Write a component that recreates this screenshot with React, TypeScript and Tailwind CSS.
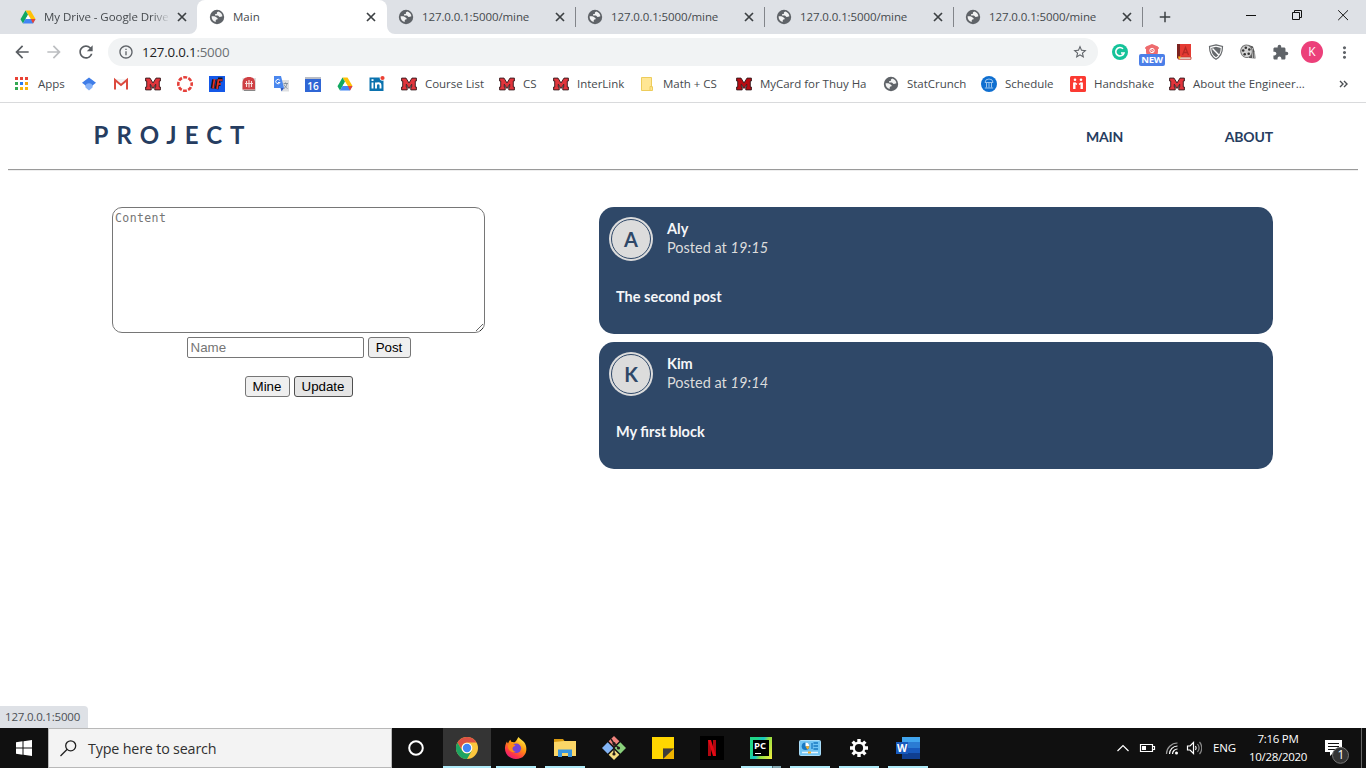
import React from "react";
import {
  MdArrowBack,
  MdArrowForward,
  MdRefresh,
  MdInfoOutline,
  MdStarBorder,
  MdExtension,
  MdMoreVert,
  MdAdd,
} from "react-icons/md";

const Globe = () => (
  <svg width="16" height="16" viewBox="0 0 16 16" className="shrink-0">
    <circle cx="8" cy="8" r="7.200" fill="#5f6368" />
    <path
      d="M9.200 2.500c-1 .5-1.500 1-1.300 1.700.1.600-.6.800-1.300.9-.7.100-.6.800-.5 1.300h2.600c.9 0 1 .8 1.600 1.300.5.500 1.500.1 2.400-.2l.7-.2c-.1-2.300-1.800-4.200-4.200-4.800zM2.600 7.300c-.2 2.900 1.500 5.100 4.100 5.700v-1.300c0-.8.5-1.200 1.300-1.200.9 0 .9-1 .3-1.400C7.600 8.600 6.900 8 6 7.500c-.9-.5-2.200-.4-3.400-.2z"
      fill="#fff"
      fillOpacity=".92"
    />
  </svg>
);

const TabClose = () => (
  <svg width="16" height="16" viewBox="0 0 16 16" className="shrink-0">
    <path d="M4 4l8 8M12 4l-8 8" stroke="#3c4043" strokeWidth="1.700" />
  </svg>
);

const Drive = () => (
  <svg width="16" height="16" viewBox="0 0 16 16" className="shrink-0">
    <path d="M5.500 1.500H10.500L15.500 10H10.800z" fill="#ffc107" />
    <path d="M5.500 1.500L8 5.800 3 14.500 .5 10.200z" fill="#11a861" />
    <path d="M5.500 10H15.500L13 14.500H3z" fill="#4285f4" />
    <path d="M10.800 10H15.500L13 14.500z" fill="#ea4335" />
    <path d="M8 6L10.400 10H5.700z" fill="#fff" />
  </svg>
);

const BlockM = ({ dark = false }: { dark?: boolean }) => (
  <svg width="16" height="14" viewBox="0 0 16 14" className="shrink-0">
    <path
      d="M.6 1.100H5L8 6 11 1.100H15.400V4H14.300V10H15.400V12.900H9.800V10H10.700V7.300L8 11.500 5.300 7.300V10H6.200V12.900H.6V10H1.700V4H.6z"
      fill={dark ? "#b80b12" : "#e0353c"}
      stroke="#30191c"
      strokeWidth=".9"
    />
  </svg>
);

const tabs = ["127.0.0.1:5000/mine", "127.0.0.1:5000/mine", "127.0.0.1:5000/mine", "127.0.0.1:5000/mine"];

function TabStrip() {
  return (
    <div className="flex h-[34px] bg-[#dee1e6] text-[11.5px] text-[#45494d]">
      <div className="flex w-[197px] shrink-0 items-center pl-5 pr-[7px]">
        <Drive />
        <span className="ml-2 w-[126px] overflow-hidden whitespace-nowrap tracking-[-0.05px] [mask-image:linear-gradient(to_right,black_85%,transparent)]">
          My Drive - Google Drive
        </span>
        <span className="ml-auto">
          <TabClose />
        </span>
      </div>
      <div className="relative flex w-[190px] shrink-0 items-center rounded-t-lg bg-white pl-3 pr-2">
        <svg className="absolute -left-2 bottom-0" width="8" height="8">
          <path d="M8 0V8H0A8 8 0 0 0 8 0z" fill="#fff" />
        </svg>
        <svg className="absolute -right-2 bottom-0" width="8" height="8">
          <path d="M0 0V8H8A8 8 0 0 1 0 0z" fill="#fff" />
        </svg>
        <Globe />
        <span className="ml-2">Main</span>
        <span className="ml-auto">
          <TabClose />
        </span>
      </div>
      {tabs.map((t, i) => (
        <div key={i} className="flex w-[189px] shrink-0 items-center pl-[11px]">
          <Globe />
          <span className="ml-2 tracking-[-0.100px]">{t}</span>
          <span className="ml-auto mr-[7px]">
            <TabClose />
          </span>
          <span className="h-5 w-px bg-[#82858a]" />
        </div>
      ))}
      <div className="flex w-[44px] items-center justify-center">
        <MdAdd className="size-[18px] text-[#3c4043]" />
      </div>
      <div className="ml-auto mr-px flex h-[29px] items-center">
        <svg width="138" height="28" viewBox="1227 0 138 28" fill="none" stroke="#111" strokeWidth="1">
          <path d="M1246 14.500h10M1292.500 11.500h7v7h-7zM1294.500 11.500v-2h7v7h-2" />
          <path d="M1338.200 9.300l9.800 9.800M1348 9.300l-9.800 9.800" />
        </svg>
      </div>
    </div>
  );
}

const Ext = ({ children }: { children: React.ReactNode }) => (
  <div className="relative flex h-8 w-8 items-center justify-center">{children}</div>
);

function Toolbar() {
  return (
    <div className="flex h-9 items-center pl-[6px] pr-[6px]">
      <Ext>
        <MdArrowBack className="size-[20px] text-[#5a5e63]" />
      </Ext>
      <Ext>
        <MdArrowForward className="size-[20px] text-[#bcbec1]" />
      </Ext>
      <Ext>
        <MdRefresh className="size-[20px] text-[#5a5e63]" />
      </Ext>
      <div className="ml-[6px] flex h-7 w-[990px] items-center rounded-full bg-[#f1f3f4] pl-[10px] pr-[10px]">
        <MdInfoOutline className="size-4 text-[#5f6368]" />
        <span className="ml-2 pt-px text-[13.300px] tracking-[-0.190px] text-[#202124]">
          127.0.0.1<span className="text-[#6b6f73]">:5000</span>
        </span>
        <MdStarBorder className="ml-auto size-4 text-[#5f6368]" />
      </div>
      <div className="ml-[6px] flex">
        <Ext>
          <svg width="16" height="16" viewBox="0 0 16 16">
            <circle cx="8" cy="8" r="8" fill="#15c39a" />
            <path d="M11 4.800A4.200 4.200 0 1 0 12 9H9" fill="none" stroke="#fff" strokeWidth="1.600" />
          </svg>
        </Ext>
        <Ext>
          <svg width="16" height="18" viewBox="0 0 16 18" className="-mt-[1px]">
            <path d="M8 1L14 3.500V9c0 3-2 5-6 7-4-2-6-4-6-7V3.500z" fill="#ee6b6e" />
            <path d="M1 5h14" stroke="#ee6b6e" strokeWidth="1.500" />
            <circle cx="8" cy="7.500" r="2.200" fill="none" stroke="#fff" />
            <path d="M6.500 6l3 3" stroke="#fff" />
          </svg>
          <span className="absolute left-[3px] top-[18px] flex h-3 w-[26px] items-center justify-center rounded-[2px] bg-[#4c7fe8] text-[9.500px] font-bold leading-none tracking-[-0.200px] text-white">
            NEW
          </span>
        </Ext>
        <Ext>
          <svg width="15" height="16" viewBox="0 0 15 16">
            <path d="M1 0H14V13H3L1 15z" fill="#e53b33" />
            <path d="M0 0H3V13L1 14.500H0z" fill="#7c2320" />
            <path d="M1.500 13H14V15.300H1.500z" fill="#eee5d8" stroke="#c2372c" strokeWidth=".8" />
            <path d="M5.500 11L8.500 3.500 11.500 11M6.500 8.500h4" fill="none" stroke="#b52a25" strokeWidth="1.300" />
            <path d="M1 12.500h3l-1.500 3z" fill="#f7bd18" />
          </svg>
        </Ext>
        <Ext>
          <svg width="16" height="16" viewBox="0 0 16 16" fill="none">
            <path d="M8 .8L14.500 2.500C14.500 9 13 12.500 8 15.300 3 12.500 1.500 9 1.500 2.500z" fill="#fff" stroke="#66696c" strokeWidth="1.200" />
            <path d="M8 2.800L12.700 4C12.500 8.500 11.500 11 8 13.200 4.500 11 3.500 8.500 3.300 4z" fill="#66696c" />
            <path d="M4.500 4.500l6.500 6.800" stroke="#fff" strokeWidth="1.400" />
          </svg>
        </Ext>
        <Ext>
          <svg width="16" height="16" viewBox="0 0 16 16">
            <path d="M8 .8L13 2.500 15 9 15.500 14.500 9 14z" fill="#555" />
            <path d="M12.500 4v10M14.300 8v6" stroke="#ccc" strokeWidth=".8" />
            <ellipse cx="6.500" cy="7.300" rx="5.700" ry="6.300" fill="#d4d4d4" stroke="#777" transform="rotate(-15 6.500 7.300)" />
            <g fill="#333">
              <circle cx="5.800" cy="3.700" r="1.300" />
              <circle cx="3.200" cy="6.500" r="1.300" />
              <circle cx="9.300" cy="5.500" r="1.300" />
              <circle cx="4.700" cy="10.300" r="1.300" />
              <circle cx="8.700" cy="9.800" r="1.300" />
            </g>
          </svg>
        </Ext>
        <Ext>
          <MdExtension className="size-[17px] text-[#5f6368]" />
        </Ext>
        <Ext>
          <span className="flex size-[22px] items-center justify-center rounded-full bg-[#ec407a] text-[12px] text-white">K</span>
        </Ext>
        <Ext>
          <MdMoreVert className="size-[19px] text-[#5f6368]" />
        </Ext>
      </div>
    </div>
  );
}

const AppsGrid = () => (
  <svg width="14" height="14" viewBox="0 0 14 14" className="shrink-0">
    <path d="M0 0h3v3H0zM5 0h3v3H5zM10 0h3v3h-3z" fill="#e94235" />
    <path d="M0 5h3v3H0z" fill="#34a853" />
    <path d="M5 5h3v3H5z" fill="#2a7bf0" />
    <path d="M10 5h3v3h-3z" fill="#f5a70b" />
    <path d="M0 10h3v3H0z" fill="#34a853" />
    <path d="M5 10h3v3H5zM10 10h3v3h-3z" fill="#f7b50c" />
  </svg>
);

const smallIcons: React.ReactNode[] = [
  <svg width="16" height="16" viewBox="0 0 16 16">
    <path d="M4 8a4 4 0 0 1 8 0l-.5 3.500-3.500 3-3.500-3z" fill="#85b1f8" />
    <path d="M8 1.500L15 6.800l-3.500 2.700C10.500 6.500 5.500 6.500 4.500 9.500L1 6.800z" fill="#3f7de8" />
  </svg>,
  <svg width="16" height="16" viewBox="0 0 16 16">
    <path d="M1 3H15V13.500H1z" fill="#f3f3f3" />
    <path d="M3 6v7.500h10V6L8 10z" fill="#fff" />
    <path d="M2 13.500V4l6 5 6-5v9.500" fill="none" stroke="#dc4a3e" strokeWidth="2" />
  </svg>,
  <BlockM />,
  <svg width="16" height="16" viewBox="0 0 16 16">
    <circle cx="8" cy="8" r="6.700" fill="none" stroke="#e5403a" strokeWidth="2.600" strokeDasharray="3.900 1.360" strokeDashoffset="1.950" />
  </svg>,
  <svg width="16" height="16" viewBox="0 0 16 16">
    <path d="M0 0H16V16H0z" fill="#1458e8" />
    <path d="M5 3.500L3.500 12.500M9.500 3.500L7.500 13M9 3.500h4.500M8.500 8h3" fill="none" stroke="#15141a" strokeWidth="3.800" />
    <path d="M5.500 3L4 12.500M9.500 4h4M8.500 8h3.500M9.500 3.500L8 13" fill="none" stroke="#e42f25" strokeWidth="1.700" />
  </svg>,
  <svg width="16" height="16" viewBox="0 0 16 16">
    <path d="M1.500 2H15v13H1.500z" fill="#ddd" />
    <path d="M1.500 13.500V7C1.500 3 4 1 8 1s6 2 6 6v6.500z" fill="#cf4044" />
    <path d="M3 14.500h11" stroke="#888" />
    <path d="M5.500 5v6M10.500 5v6M4 7.500h8M8 4v7.500" stroke="#f8dedc" strokeWidth="1.100" />
  </svg>,
  <svg width="16" height="16" viewBox="0 0 16 16">
    <path d="M7 4h9v11.500H9z" fill="#dedfe1" />
    <path d="M1 0h7l3 12H1z" fill="#4a87ee" />
    <path d="M7.500 12H11l-2.500 3.500z" fill="#2d56b8" />
    <path d="M6.800 4.300A2.200 2.200 0 1 0 7 6.500H5" fill="none" stroke="#fff" />
    <path d="M10.500 7.500h4.500M12.500 6.500v1M14 7.500c-.5 2.500-1.500 4-3 5M11 8.500c.5 1.500 2 3 3.500 4" fill="none" stroke="#708090" strokeWidth=".8" />
  </svg>,
  <span className="relative flex h-[15px] w-4 items-end justify-center bg-[#2f66d5] text-[10px] font-semibold leading-[12px] text-white">
    <span className="absolute left-0 top-0 h-[2px] w-4 bg-[#b8bcc5]" />
    16
  </span>,
  <Drive />,
  <svg width="16" height="16" viewBox="0 0 16 16" className="overflow-visible">
    <path d="M.5 1.500h14v13.500H.5z" fill="#0b72ae" />
    <path d="M3.500 6.500v6M7 6.500v6M7 9.500c0-3 4.500-3 4.500 0v3" fill="none" stroke="#fff" strokeWidth="1.900" />
    <path d="M2.500 3.200h2v1.800h-2z" fill="#fff" />
    <circle cx="13.500" cy="2" r="2.800" fill="#fff" />
    <circle cx="13.500" cy="2" r="2.100" fill="#eb4034" />
  </svg>,
];

const Folder = () => (
  <svg width="16" height="16" viewBox="0 0 16 16" className="shrink-0">
    <path d="M2.500 1.500h10v9.500h1v3.500h-11z" fill="#ffe694" stroke="#edcc5b" />
    <path d="M11 14.500v-4h2.500" fill="none" stroke="#edcc5b" />
  </svg>
);
const Schedule = () => (
  <svg width="16" height="16" viewBox="0 0 16 16" className="shrink-0">
    <circle cx="8" cy="8" r="8" fill="#0f6fd0" />
    <path d="M4 6.500a4 3.500 0 0 1 8 0zM5.500 7v4.500M8 7v4.500M10.500 7v4.500M3.800 12h8.400" fill="none" stroke="#a7cdf0" strokeWidth=".9" />
  </svg>
);
const Handshake = () => (
  <svg width="16" height="16" viewBox="0 0 16 16" className="shrink-0">
    <rect width="16" height="16" rx="1.500" fill="#fb3a32" />
    <path d="M4.300 6.500V13M11.700 6.500V13" fill="none" stroke="#fff" strokeWidth="2.400" />
    <path d="M4.500 7l2.500 1.300M11.500 7l-2.500 1.300" stroke="#fff" strokeWidth="1.500" />
    <circle cx="5" cy="3.800" r="1.300" fill="#fff" />
    <circle cx="11" cy="3.800" r="1.300" fill="#fff" />
  </svg>
);

const bookmarks: { label: string; cls: string; icon: React.ReactNode }[] = [
  { label: "Course List", cls: "w-[98px]", icon: <BlockM /> },
  { label: "CS", cls: "w-[54px]", icon: <BlockM /> },
  { label: "InterLink", cls: "w-[86px]", icon: <BlockM /> },
  { label: "Math + CS", cls: "w-[97px]", icon: <Folder /> },
  { label: "MyCard for Thuy Ha", cls: "w-[147px]", icon: <BlockM dark /> },
  { label: "StatCrunch", cls: "w-[98px]", icon: <Globe /> },
  { label: "Schedule", cls: "w-[89px]", icon: <Schedule /> },
  { label: "Handshake", cls: "w-[99px]", icon: <Handshake /> },
  { label: "About the Engineer...", cls: "w-[150px]", icon: <BlockM /> },
];

function Bookmarks() {
  return (
    <div className="flex h-[33px] items-center border-b border-[#d9dadc] pb-[4px] pl-[15px] text-[11.500px] text-[#45494d]">
      <div className="flex w-[58px] items-center">
        <AppsGrid />
        <span className="ml-[9px]">Apps</span>
      </div>
      {smallIcons.map((icon, i) => (
        <div key={i} className="flex w-8 justify-center">
          {icon}
        </div>
      ))}
      <div className="ml-2 flex">
        {bookmarks.map((b) => (
          <div key={b.label} className={`flex shrink-0 items-center whitespace-nowrap ${b.cls}`}>
            {b.icon}
            <span className="ml-2 tracking-[-0.030px]">{b.label}</span>
          </div>
        ))}
      </div>
      <svg className="ml-[20px]" width="9" height="8" viewBox="0 0 9 8" fill="none" stroke="#4b4f53" strokeWidth="1.400">
        <path d="M1 1l3 3-3 3M5 1l3 3-3 3" />
      </svg>
    </div>
  );
}

function Post({ name, time, text }: { name: string; time: string; text: string }) {
  return (
    <article className="h-[127px] rounded-[15px] bg-[#2f4868] p-[10px] text-[14.500px] leading-[19px] text-[#f5f6f8]">
      <div className="flex">
        <div className="flex size-11 items-center justify-center rounded-full bg-[#dcdcdc] p-[2px]">
          <div className="flex size-full items-center justify-center rounded-full border border-[#2f4868] pt-px text-[20px] font-bold text-[#2f4868]">
            {name[0]}
          </div>
        </div>
        <div className="ml-[14px] pt-[2px]">
          <div className="font-bold">{name}</div>
          <div className="text-[#dcdcdc]">
            Posted at <i className="tracking-[0.100px]">{time}</i>
          </div>
        </div>
      </div>
      <p className="ml-[7px] mt-[26px] font-bold">{text}</p>
    </article>
  );
}

const buttonClass = "h-[21px] rounded-[3px] border text-[13.333px] leading-none text-black font-['Liberation_Sans',sans-serif]";

function Page() {
  return (
    <main className="relative flex-1 bg-white px-2 font-['Lato',sans-serif]">
      <header className="flex h-[66px] items-start justify-between pl-[85.500px] pr-[85px]">
        <h1 className="mt-[14px] text-[24px] font-bold leading-9 tracking-[8.050px] text-[#263d61]">PROJECT</h1>
        <nav className="mt-[24px] flex gap-[101.500px] text-[14px] font-bold leading-5 tracking-[-0.150px] text-[#263d61]">
          <a>MAIN</a>
          <a>ABOUT</a>
        </nav>
      </header>
      <div className="h-[2px] border-b border-t border-b-[#eeeeee] border-t-[#9a9a9a]" />
      <div className="flex pt-[36px]">
        <section className="ml-[104px] flex w-[373px] flex-col items-center">
          <textarea
            placeholder="Content"
            className="h-[126px] w-[373px] resize rounded-[10px] border border-[#767676] px-[2px] py-[3px] font-['DejaVu_Sans_Mono',monospace] text-[11.500px] leading-[15px] tracking-[0.400px] placeholder:text-[#757575]"
          />
          <div className="mt-1 flex gap-1">
            <input
              placeholder="Name"
              className="h-[21px] w-[177px] rounded-[2px] border border-[#767676] px-[3px] font-['Liberation_Sans',sans-serif] text-[13.333px] placeholder:text-[#757575]"
            />
            <button className={`${buttonClass} w-[43px] border-[#767676] bg-[#efefef]`}>Post</button>
          </div>
          <div className="mt-[18px] flex gap-1">
            <button className={`${buttonClass} w-[45px] border-[#767676] bg-[#efefef]`}>Mine</button>
            <button className={`${buttonClass} w-[59px] border-[#4f4f4f] bg-[#e5e5e5]`}>Update</button>
          </div>
        </section>
        <section className="ml-[114px] flex w-[674px] flex-col gap-2">
          <Post name="Aly" time="19:15" text="The second post" />
          <Post name="Kim" time="19:14" text="My first block" />
        </section>
      </div>
      <div className="absolute bottom-0 left-0 flex h-[22px] w-[88px] items-center rounded-tr-[4px] bg-[#dee1e6] pl-[5px] font-['Open_Sans',sans-serif] text-[11.500px] tracking-[-0.200px] text-[#4c5055]">
        127.0.0.1:5000
      </div>
    </main>
  );
}

const Chrome = () => (
  <svg width="22" height="22" viewBox="0 0 22 22">
    <circle cx="11" cy="11" r="11" fill="#fbc63d" />
    <path d="M1.470 5.500A11 11 0 0 1 20.530 5.500H11A5.500 5.500 0 0 0 6.200 13.700z" fill="#dd5144" />
    <path d="M1.470 5.500A11 11 0 0 0 11 22L15.800 13.700A5.500 5.500 0 0 1 6.200 13.700z" fill="#1da462" />
    <circle cx="11" cy="11" r="5.300" fill="#fff" />
    <circle cx="11" cy="11" r="4.200" fill="#4285f4" />
  </svg>
);
const Firefox = () => (
  <svg width="24" height="24" viewBox="0 0 24 24">
    <defs>
      <linearGradient id="ff" x1=".8" y1="0" x2=".2" y2="1">
        <stop offset="0" stopColor="#fff44f" />
        <stop offset=".4" stopColor="#ff980e" />
        <stop offset=".75" stopColor="#ff3647" />
        <stop offset="1" stopColor="#e31587" />
      </linearGradient>
    </defs>
    <path d="M14.500 1c1 2 4 3 5.500 5 4.500 5.500 3 17-8 17C4.500 23 .5 17 1 11.500c.2-2.500 1-4.500 2-6 .2 1 .5 1.500 1 2 .8-1.800 1.500-3 2.500-3.700 0 1 .4 1.700 1.200 2.200 1.200-.3 2 0 3 .3C12.500 5 13 3 14.500 1z" fill="url(#ff)" />
    <circle cx="12.300" cy="12.300" r="4.800" fill="#7342d8" />
    <path d="M4 9c3-1.500 5-1.500 7.500.5-1.500 1-3 1.500-3 3 0 2 1.500 3 3.500 3.500-5 1.500-8.500-2-8-7z" fill="#ff8a16" />
  </svg>
);
const Explorer = () => (
  <svg width="22" height="20" viewBox="0 0 22 20">
    <path d="M0 1h9l1.500 2H22v4H0z" fill="#d99a10" />
    <path d="M0 4l10-1h12v15H0z" fill="#fbd667" />
    <path d="M4 19v-7.500h14V19h-4v-4H8v4z" fill="#3a96dd" />
  </svg>
);
const Git = () => (
  <svg width="24" height="24" viewBox="0 0 24 24">
    <path d="M12 0L17.300 5.300 12 10.600 6.700 5.300z" fill="#f0837d" />
    <path d="M5.700 6.300L11.400 12 5.700 17.700 0 12z" fill="#83b4f6" />
    <path d="M18.300 6.300L24 12 18.300 17.700 12.600 12z" fill="#8ad17c" />
    <path d="M12 13.400L17.300 18.700 12 24 6.700 18.700z" fill="#f6dd80" />
    <path d="M9 3l3 4.500v10.500M12 7.500l4.500 4.500" fill="none" stroke="#241c1b" strokeWidth="1.400" />
    <circle cx="12" cy="7.500" r="1.600" fill="#241c1b" />
    <circle cx="16.500" cy="12" r="1.600" fill="#241c1b" />
    <circle cx="12" cy="18" r="1.600" fill="#241c1b" />
  </svg>
);
const Sticky = () => (
  <svg width="22" height="22" viewBox="0 0 22 22">
    <path d="M0 0h22v11L11 22H0z" fill="#ffd600" />
    <path d="M11 22V11h11v11z" fill="#f0b400" />
    <path d="M11 22V11.500h11z" fill="#3e3d3b" />
  </svg>
);
const Netflix = () => (
  <svg width="24" height="24" viewBox="0 0 24 24">
    <path d="M0 0h24v24H0z" fill="#000" />
    <path d="M8 4h3v16H8zM13 4h3v16h-3z" fill="#b10710" />
    <path d="M8 4h3l5 16h-3z" fill="#e50914" />
  </svg>
);
const PyCharm = () => (
  <span className="flex size-[22px] items-center justify-center bg-[linear-gradient(115deg,#21d789_25%,#16c3ca_45%,#8fe043_60%,#f5ed3f)]">
    <span className="flex size-4 flex-col justify-between bg-black px-px pb-[2px] pt-[2px] font-['Open_Sans',sans-serif] text-[9.500px] font-bold leading-[8px] text-white">
      PC
      <span className="ml-px h-px w-[6px] bg-white" />
    </span>
  </span>
);
const ControlPanel = () => (
  <svg width="22" height="16" viewBox="0 0 22 16">
    <rect x=".5" y=".5" width="21" height="15" rx="1" fill="#71c4f3" stroke="#a8dcf8" />
    <circle cx="6.500" cy="6.200" r="3.800" fill="#1979c2" />
    <path d="M6.500 6.200V2.400a3.800 3.800 0 0 1 3.800 3.800z" fill="#fff" />
    <path d="M6.500 6.200h3.800a3.800 3.800 0 0 1-2 3.300z" fill="#f7ad2a" />
    <path d="M14.500 3h4.500M14.500 6h4.500M14.500 9h4.500M13 3v6" stroke="#1979c2" strokeWidth="1.300" />
    <path d="M3 12.500h16" stroke="#e6f6ff" strokeWidth="1.500" />
    <path d="M9 12.500h3" stroke="#f7ad2a" strokeWidth="2" />
  </svg>
);
const Gear = () => (
  <svg width="18" height="18" viewBox="0 0 18 18">
    <g stroke="#fff" strokeWidth="3.400">
      <path d="M9 0v18M0 9h18M2.640 2.640l12.720 12.720M15.360 2.640L2.640 15.360" />
    </g>
    <circle cx="9" cy="9" r="6.500" fill="#fff" />
    <circle cx="9" cy="9" r="4.100" fill="#101010" />
  </svg>
);
const Word = () => (
  <span className="flex h-[22px] w-6 items-center justify-start bg-[linear-gradient(#41a5ee_25%,#2b7cd3_25%_50%,#185abd_50%_75%,#103f91_75%)] bg-[length:18px_100%] bg-right bg-no-repeat">
    <span className="flex size-3 items-center justify-center bg-[#185abd] font-['Open_Sans',sans-serif] text-[10.500px] font-bold leading-none text-white">
      W
    </span>
  </span>
);

const apps: { icon: React.ReactNode; open?: boolean; active?: boolean; multi?: boolean }[] = [
  { icon: <Chrome />, active: true },
  { icon: <Firefox />, open: true },
  { icon: <Explorer />, open: true },
  { icon: <Git /> },
  { icon: <Sticky /> },
  { icon: <Netflix /> },
  { icon: <PyCharm />, open: true, multi: true },
  { icon: <ControlPanel />, open: true },
  { icon: <Gear />, open: true },
  { icon: <Word />, open: true },
];

function Taskbar() {
  return (
    <footer className="flex h-10 bg-[#101010] text-white">
      <div className="flex w-12 items-center justify-center">
        <svg width="16" height="16" viewBox="0 0 16 16" fill="#fff">
          <path d="M0 2.200L6.500 1.300V7.500H0zM7.500 1.200L16 0V7.500H7.500zM0 8.500H6.500V14.700L0 13.800zM7.500 8.500H16V16L7.500 14.800z" />
        </svg>
      </div>
      <div className="flex w-[344px] items-center border border-[#b8b8b8] bg-[#f3f3f3] pl-[11px]">
        <svg width="17" height="17" viewBox="0 0 17 17" fill="none" stroke="#202020" strokeWidth="1.300">
          <circle cx="10.700" cy="5.800" r="5" />
          <path d="M7.200 9.300L.5 16" />
        </svg>
        <span className="ml-[11px] pt-px text-[14.300px] tracking-[-0.170px] text-[#303030]">Type here to search</span>
      </div>
      <div className="mr-[3px] flex w-12 items-center justify-center">
        <svg width="16" height="16" viewBox="0 0 16 16">
          <circle cx="8" cy="8" r="6.800" fill="none" stroke="#fff" strokeWidth="2" />
        </svg>
      </div>
      <div className="flex gap-px">
        {apps.map((a, i) => (
          <div key={i} className={`flex w-12 flex-col items-center ${a.active ? "bg-[#343434]" : ""}`}>
            <div className="flex flex-1 items-center justify-center pt-[2px]">{a.icon}</div>
            <div className={`flex h-[2px] ${a.active ? "w-12 bg-[#aeeaf8]" : a.open ? "w-10 bg-[#aeeaf8]" : "w-10"}`}>
              {a.multi && <span className="ml-auto h-full w-[9px] border-l border-[#507078] bg-[#84a9b3]" />}
            </div>
          </div>
        ))}
      </div>
      <div className="ml-auto flex items-center text-[11.500px] leading-[18px]">
        <svg width="86" height="20" viewBox="1116 738 86 20" fill="none" stroke="#fff" strokeWidth="1.200">
          <path d="M1117.500 751l5.500-5.500 5.500 5.500" />
          <path d="M1140.500 744.500h12v7h-12zM1153 746.500h1.500v3h-1.500" />
          <path d="M1142 746h4v4h-4z" fill="#fff" stroke="none" />
          <path d="M1166.500 754a11 11 0 0 1 11-11" stroke="#9a9a9a" />
          <path d="M1169.500 754a8 8 0 0 1 8-8M1172.500 754a5 5 0 0 1 5-5" />
          <circle cx="1176.500" cy="753" r="1.500" fill="#fff" stroke="none" />
          <path d="M1187.500 746h2.500l3.500-3.500v11L1190 750h-2.500z" />
          <path d="M1195.500 746c1 1.500 1 2.500 0 4" />
          <path d="M1197.500 744c2 2.500 2 5.500 0 8M1199.500 742c3 3.500 3 8.500 0 12" stroke="#888" />
        </svg>
        <span className="ml-[11px] w-[24px] tracking-[-0.200px]">ENG</span>
        <div className="ml-[11px] w-[60px] whitespace-nowrap text-center tracking-[-0.300px]">
          <div>7:16 PM</div>
          <div>10/28/2020</div>
        </div>
        <div className="relative ml-[17px] h-[26px] w-[26px]">
          <svg width="26" height="30" viewBox="0 0 26 30">
            <path d="M0 5h17v12H9l-4 4v-4H0z" fill="#fff" />
            <path d="M3 8.500h11M3 11.500h11M3 14.500h8" stroke="#111" />
            <circle cx="15.500" cy="20.300" r="8" fill="#343434" stroke="#777" />
          </svg>
          <span className="absolute left-[8px] top-[11px] w-4 text-center text-[12px]">1</span>
        </div>
        <span className="ml-[10px] mr-1 h-10 w-px bg-[#666]" />
      </div>
    </footer>
  );
}

export default function App() {
  return (
    <div className="flex h-[768px] w-[1366px] flex-col overflow-hidden bg-white font-['Open_Sans',sans-serif]">
      <TabStrip />
      <Toolbar />
      <Bookmarks />
      <Page />
      <Taskbar />
    </div>
  );
}
